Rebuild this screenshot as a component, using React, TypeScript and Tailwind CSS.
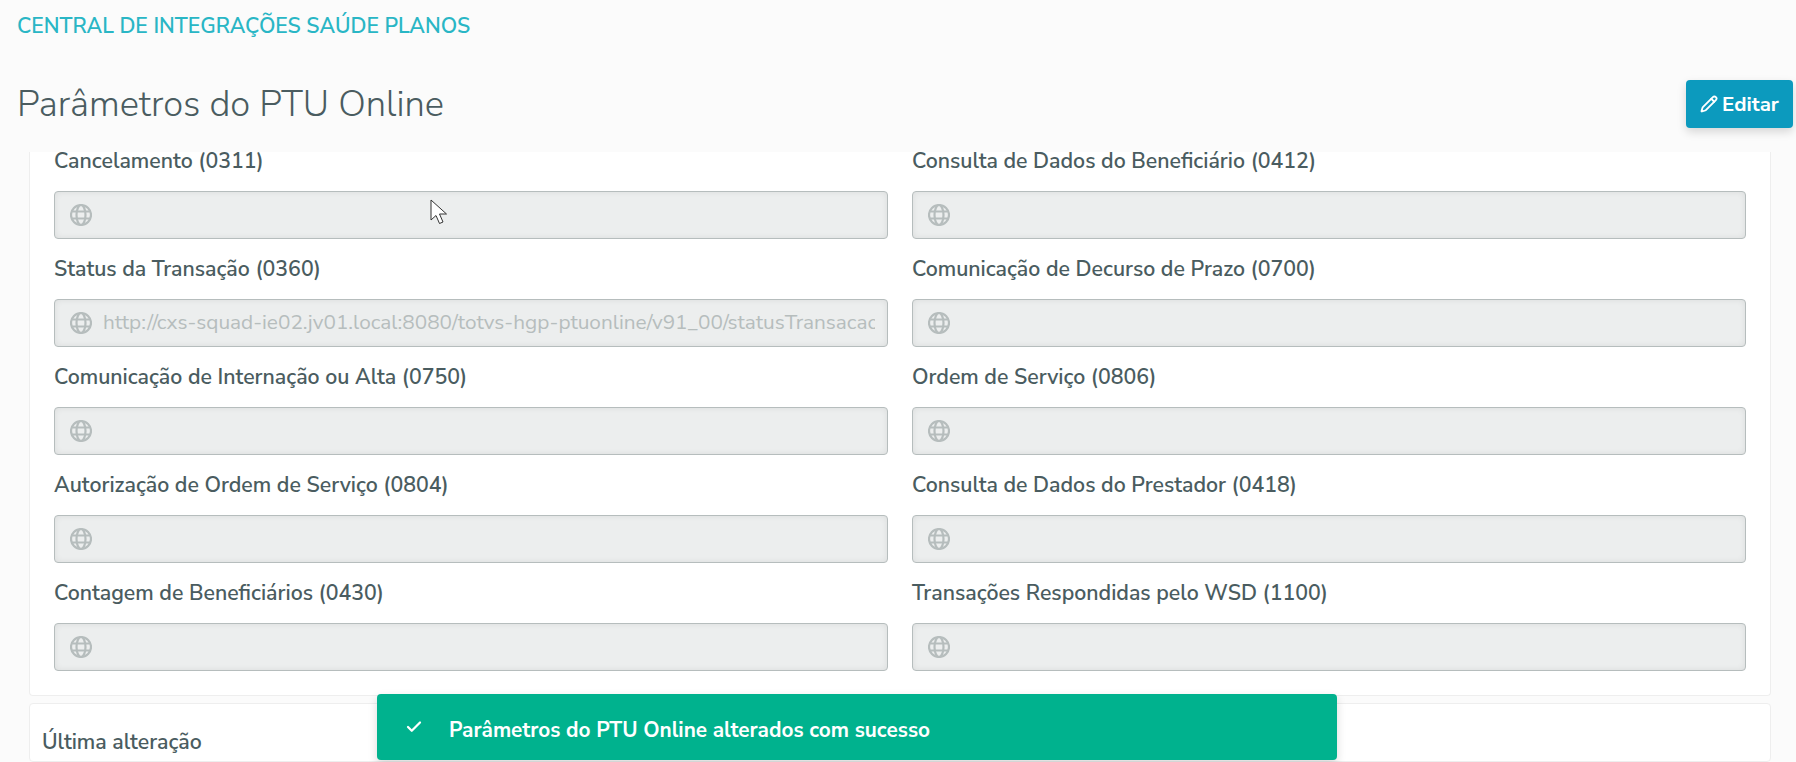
import { Check, Pencil } from "lucide-react";

const FONT = "font-['Nunito_Sans','Noto_Sans','Open_Sans',sans-serif]";

const fields = [
    { label: "Cancelamento (0311)", value: "" },
    { label: "Consulta de Dados do Beneficiário (0412)", value: "" },
    {
        label: "Status da Transação (0360)",
        value: "http://cxs-squad-ie02.jv01.local:8080/totvs-hgp-ptuonline/v91_00/statusTransacao",
    },
    { label: "Comunicação de Decurso de Prazo (0700)", value: "" },
    { label: "Comunicação de Internação ou Alta (0750)", value: "" },
    { label: "Ordem de Serviço (0806)", value: "" },
    { label: "Autorização de Ordem de Serviço (0804)", value: "" },
    { label: "Consulta de Dados do Prestador (0418)", value: "" },
    { label: "Contagem de Beneficiários (0430)", value: "" },
    { label: "Transações Respondidas pelo WSD (1100)", value: "" },
];

const GlobeIcon = () => (
    <svg width="22" height="24" viewBox="0 0 22 24" fill="none" stroke="#b6bdbd" strokeWidth="2.2" className="shrink-0">
        <circle cx="11" cy="12" r="10" />
        <ellipse cx="11" cy="12" rx="4.5" ry="10" />
        <path d="M2 8.5h18M2 15.5h18" />
    </svg>
);

const Field = ({ label, value }: { label: string; value: string }) => (
    <div className="flex flex-col gap-[21px]">
        <div className="text-[21.3px] leading-[18px] font-semibold text-[#4a5c60] whitespace-nowrap">{label}</div>
        <div className="flex h-[48px] items-center gap-[11px] rounded-[4px] border border-[#b6bdbd] bg-[#eceeee] pl-[15px] pr-[12px] shadow-[inset_0_0_6px_rgba(0,0,0,0.08)]">
            <GlobeIcon />
            <div className="overflow-hidden whitespace-nowrap text-[20.8px] text-[#b6bdbd]">{value}</div>
        </div>
    </div>
);

const Cursor = () => (
    <svg width="18" height="28" viewBox="0 0 18 28" className="absolute left-[430px] top-[199px]">
        <path d="M1 1v20l5-4.5 3.5 8 3.5-1.5-3.5-8h7z" fill="#fff" stroke="#333" strokeWidth="1" />
    </svg>
);

export default function App() {
    return (
        <div className={`${FONT} relative flex h-[762px] flex-col overflow-hidden bg-[#fbfbfb]`}>
            <div className="flex h-[152px] shrink-0 flex-col pl-[17px] pr-[3px]">
                <div className="mt-[14px] text-[21.2px] leading-[24px] font-semibold text-[#29b6c5]">
                    CENTRAL DE INTEGRAÇÕES SAÚDE PLANOS
                </div>
                <div className="mt-[42px] flex items-start justify-between">
                    <h1 className="mt-[2px] text-[36.3px] leading-[44px] font-light text-[#4a5c60]">Parâmetros do PTU Online</h1>
                    <button className="flex h-[48px] w-[107px] items-center justify-center gap-[4px] rounded-[4px] bg-[#0c9abe] text-[20.5px] font-bold text-white shadow-[0_4px_10px_rgba(0,0,0,0.15)]">
                        <Pencil size={18} strokeWidth={2.4} />
                        Editar
                    </button>
                </div>
            </div>

            <div className="ml-[29px] w-[1742px] rounded-b-[4px] border-x border-b border-[#eeeeee] bg-white pb-[24px] pl-[24px] pr-[24px]">
                <div className="grid grid-cols-2 gap-x-[24px] gap-y-[21px]">
                    {fields.map((field) => (
                        <Field key={field.label} label={field.label} value={field.value} />
                    ))}
                </div>
            </div>

            <div className="ml-[29px] mt-[7px] h-[100px] w-[1742px] rounded-[4px] border border-[#eeeeee] bg-white pl-[12px] pt-[26px]">
                <div className="text-[21.3px] leading-[24px] font-semibold text-[#4a5c60]">Última alteração</div>
            </div>

            <div className="absolute left-[377px] top-[694px] flex h-[66px] w-[960px] items-center rounded-[4px] bg-[#00b28e] pl-[28px] text-[20.8px] font-bold text-white shadow-[0_4px_10px_rgba(0,0,0,0.15)]">
                <Check size={18} strokeWidth={3} className="mr-[26px]" />
                <span className="mt-[8px]">Parâmetros do PTU Online alterados com sucesso</span>
            </div>

            <Cursor />
        </div>
    );
}
